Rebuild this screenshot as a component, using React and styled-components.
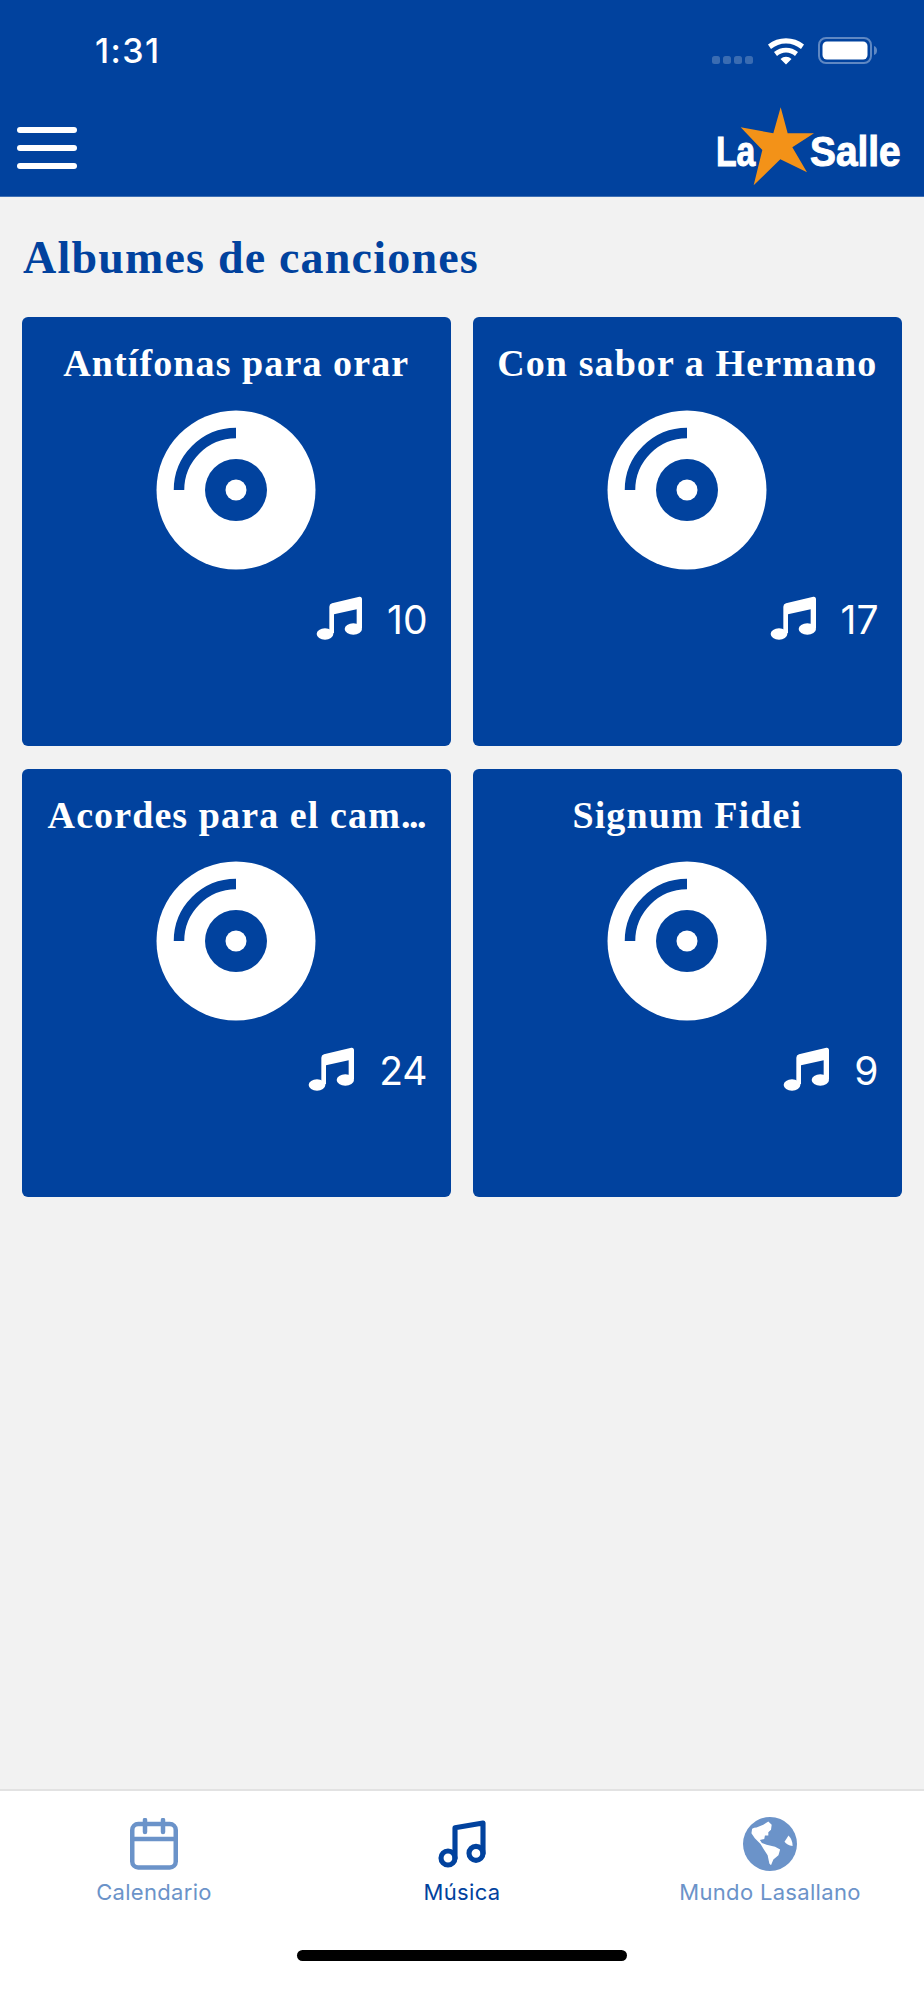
import styled, { createGlobalStyle } from "styled-components";
import { Music } from "lucide-react";

const BLUE = "#01429e";
const SOFT = "#6b93c9";

const GlobalStyle = createGlobalStyle`
  html, body {
    margin: 0;
    padding: 0;
    background: #f2f2f2;
  }
  * {
    box-sizing: border-box;
  }
`;

const Page = styled.div`
  display: flex;
  flex-direction: column;
  width: 924px;
  height: 2000px;
  background: #f2f2f2;
  font-family: Inter, "Liberation Sans", sans-serif;
`;

const Header = styled.header`
  height: 197px;
  background: ${BLUE};
  border-bottom: 1px solid #3f70b4;
  color: #fff;
`;

const StatusBar = styled.div`
  display: flex;
  align-items: flex-start;
  justify-content: space-between;
  height: 100px;
  padding: 31px 42px 0 95px;
`;

const Time = styled.span`
  font-size: 34px;
  line-height: 40px;
  font-weight: 500;
  letter-spacing: 1.4px;
`;

const StatusIcons = styled.div`
  display: flex;
  align-items: flex-start;
  padding-top: 6px;
`;

const NavRow = styled.div`
  display: flex;
  align-items: flex-start;
  justify-content: space-between;
  padding: 0 14px 0 17px;
`;

const Burger = styled.div`
  display: flex;
  flex-direction: column;
  gap: 12px;
  width: 60px;
  padding-top: 27px;
`;

const BurgerBar = styled.span`
  display: block;
  height: 6px;
  border-radius: 3px;
  background: #fff;
`;

const Main = styled.main`
  flex: 1;
  padding: 0 22.5px 0 22px;
`;

const Heading = styled.h1`
  margin: 34px 0 32px 1px;
  font-family: "Liberation Serif", serif;
  font-size: 46px;
  line-height: 54px;
  font-weight: 700;
  letter-spacing: 1.2px;
  color: ${BLUE};
`;

const AlbumGrid = styled.div`
  display: grid;
  grid-template-columns: 1fr 1fr;
  gap: 23px 22.5px;
`;

const AlbumCard = styled.article`
  display: flex;
  flex-direction: column;
  align-items: center;
  height: 428.5px;
  padding-top: 23px;
  border-radius: 6px;
  background: ${BLUE};
  color: #fff;
`;

const AlbumTitle = styled.h2`
  margin: 0;
  font-family: "Liberation Serif", serif;
  font-size: 38px;
  line-height: 46px;
  font-weight: 700;
  letter-spacing: 1.1px;
  white-space: nowrap;
`;

const TitleDots = styled.span`
  letter-spacing: -1.5px;
`;

const Disc = styled.svg`
  display: block;
  width: 160px;
  height: 160px;
  margin-top: 23.5px;
`;

const TrackCount = styled.div`
  display: flex;
  align-items: center;
  justify-content: flex-end;
  gap: 24px;
  align-self: stretch;
  height: 48px;
  margin-top: 26px;
  padding-right: 23px;
  font-size: 39px;
  line-height: 48px;
`;

const TabBar = styled.footer`
  display: flex;
  flex-direction: column;
  align-items: center;
  height: 211px;
  background: #fff;
  border-top: 2px solid #e2e2e2;
`;

const Tabs = styled.nav`
  display: grid;
  grid-template-columns: repeat(3, 308px);
  padding-top: 22px;
`;

const Tab = styled.div`
  display: flex;
  flex-direction: column;
  align-items: center;
  color: ${(p) => (p.$active ? BLUE : SOFT)};
`;

const TabIcon = styled.div`
  display: flex;
  align-items: center;
  justify-content: center;
  height: 62px;
`;

const TabLabel = styled.span`
  margin-top: 3px;
  font-size: 22px;
  line-height: 28px;
  letter-spacing: 0.32px;
`;

const HomeIndicator = styled.div`
  width: 330px;
  height: 11px;
  margin-top: 44px;
  border-radius: 6px;
  background: #000;
`;

const albums = [
  { title: "Antífonas para orar", count: 10 },
  { title: "Con sabor a Hermano", count: 17 },
  { title: "Acordes para el cam", dots: true, count: 24 },
  { title: "Signum Fidei", count: 9 },
];

function StatusGlyphs() {
  return (
    <svg width="170" height="28" viewBox="0 0 170 28">
      {[0, 11, 22, 33].map((x) => (
        <rect key={x} x={x} y="19" width="8" height="8" rx="2.5" fill="#3a6cb2" />
      ))}
      <path
        d="M56 9.5a29 29 0 0 1 36 0l-3 4.5a23 23 0 0 0-30 0z M62 17a19 19 0 0 1 24 0l-3 4a13 13 0 0 0-18 0z M68.500 24a8 8 0 0 1 11 0L74 29.500z"
        fill="#fff"
        transform="translate(0 -2)"
      />
      <rect x="107" y="1" width="52" height="25" rx="7" fill="none" stroke="#5f88c3" strokeWidth="2" />
      <rect x="110.500" y="4.500" width="45" height="18" rx="4.500" fill="#fff" />
      <path d="M162 9c2.500.5 3 3 3 4.500s-.5 4-3 4.500z" fill="#5f88c3" />
    </svg>
  );
}

function Logo() {
  return (
    <svg width="205" height="90" viewBox="0 0 615 270">
      <text
        x="33"
        y="198"
        fontFamily="Liberation Sans"
        fontWeight="700"
        fontSize="126"
        fill="#fff"
        stroke="#fff"
        strokeWidth="3"
        textLength="118"
        lengthAdjust="spacingAndGlyphs"
      >
        La
      </text>
      <text
        x="315"
        y="198"
        fontFamily="Liberation Sans"
        fontWeight="700"
        fontSize="126"
        fill="#fff"
        stroke="#fff"
        strokeWidth="3"
        textLength="272"
        lengthAdjust="spacingAndGlyphs"
      >
        Salle
      </text>
      <polygon
        points="227,22 248,100 327,100 262,142 306,217 226,178 146,256 172,150 107,82 205,100"
        fill="#f39218"
      />
    </svg>
  );
}

function DiscIcon() {
  return (
    <Disc viewBox="0 0 160 160">
      <circle cx="80" cy="80" r="79.500" fill="#fff" />
      <circle cx="80" cy="80" r="31" fill={BLUE} />
      <circle cx="80" cy="80" r="10.500" fill="#fff" />
      <path d="M23 80 A57 57 0 0 1 80 23" fill="none" stroke={BLUE} strokeWidth="10.500" />
    </Disc>
  );
}

function NoteIcon() {
  return (
    <svg width="60" height="60" viewBox="0 0 180 180" style={{ margin: "0 -7px" }}>
      <path
        d="M58 125V50q0-8 8-10l82-20q8-1 8 8v87h-16V58L72 73v57H58z"
        fill="#fff"
      />
      <ellipse cx="45" cy="132" rx="25" ry="17" fill="#fff" />
      <ellipse cx="130" cy="117" rx="26" ry="17" fill="#fff" />
    </svg>
  );
}

function CalendarIcon() {
  return (
    <svg width="48" height="52" viewBox="0 0 48 52" fill="none" stroke="currentColor" strokeWidth="4.500">
      <rect x="2.250" y="6" width="43.500" height="43.500" rx="6" />
      <path d="M2 21h44" />
      <path d="M15 2v12M33 2v12" strokeLinecap="round" />
    </svg>
  );
}

function GlobeIcon() {
  return (
    <svg width="54" height="54" viewBox="25 17 160 160">
      <circle cx="105" cy="97" r="80" fill="currentColor" />
      <path
        d="M52 52q6-4 13-4l20-8 15-10 10 10-2 15-8 7v10H90l-2 10-13 3 6 9 14 5 25 6 15 8-5 17-15 13-7 17-5-5-5-25-13-20-8-13-17-17-10-15z"
        fill="#fff"
      />
      <path d="M160 72q12 13 12 31-17-3-24-13z" fill="#fff" />
    </svg>
  );
}

export default function App() {
  return (
    <Page>
      <GlobalStyle />
      <Header>
        <StatusBar>
          <Time>1:31</Time>
          <StatusIcons>
            <StatusGlyphs />
          </StatusIcons>
        </StatusBar>
        <NavRow>
          <Burger>
            <BurgerBar />
            <BurgerBar />
            <BurgerBar />
          </Burger>
          <Logo />
        </NavRow>
      </Header>
      <Main>
        <Heading>Albumes de canciones</Heading>
        <AlbumGrid>
          {albums.map((album) => (
            <AlbumCard key={album.title}>
              <AlbumTitle>
                {album.title}
                {album.dots && <TitleDots>...</TitleDots>}
              </AlbumTitle>
              <DiscIcon />
              <TrackCount>
                <NoteIcon />
                <span>{album.count}</span>
              </TrackCount>
            </AlbumCard>
          ))}
        </AlbumGrid>
      </Main>
      <TabBar>
        <Tabs>
          <Tab>
            <TabIcon>
              <CalendarIcon />
            </TabIcon>
            <TabLabel>Calendario</TabLabel>
          </Tab>
          <Tab $active>
            <TabIcon>
              <Music size={56} strokeWidth={2.2} />
            </TabIcon>
            <TabLabel>Música</TabLabel>
          </Tab>
          <Tab>
            <TabIcon>
              <GlobeIcon />
            </TabIcon>
            <TabLabel>Mundo Lasallano</TabLabel>
          </Tab>
        </Tabs>
        <HomeIndicator />
      </TabBar>
    </Page>
  );
}
